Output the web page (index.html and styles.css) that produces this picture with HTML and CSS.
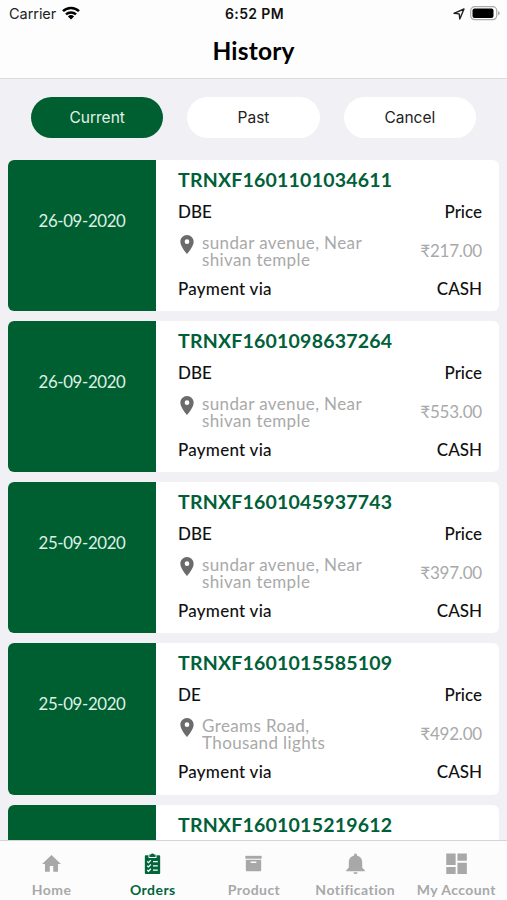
FILE: index.html
```html
<!DOCTYPE html>
<html lang="en">
<head>
<meta charset="utf-8">
<meta name="viewport" content="width=device-width, initial-scale=1">
<title>History</title>
<link rel="stylesheet" href="styles.css">
</head>
<body>
<svg width="0" height="0" class="defs" aria-hidden="true">
  <symbol id="pin" viewBox="5 2 14 20"><path fill-rule="evenodd" d="M12 2C8.13 2 5 5.13 5 9c0 5.25 7 13 7 13s7-7.75 7-13c0-3.87-3.13-7-7-7zm0 9.5a2.5 2.5 0 1 1 0-5 2.5 2.5 0 0 1 0 5z"/></symbol>
</svg>
<div class="app">
  <header class="header">
    <div class="status">
      <div class="carrier"><span>Carrier</span>
        <svg class="wifi" viewBox="0 0 18 14" fill="none" stroke="#000" stroke-width="2.5"><path d="M1 5.2a11.5 11.5 0 0 1 16 0M4 8.4a7.2 7.2 0 0 1 10 0"/><path fill="#000" stroke="none" d="M5.9 10.5a4.5 4.5 0 0 1 6.2 0L9 13.6z"/></svg>
      </div>
      <span class="time">6:52 PM</span>
      <div class="power">
        <svg class="arrow" viewBox="0 0 12 12" fill="none" stroke="#222" stroke-width="1.4" stroke-linejoin="round"><path d="M1 5.3 11 1 6.8 11 6.2 5.9z"/></svg>
        <svg class="battery" viewBox="0 0 30 15"><rect x=".7" y=".7" width="26" height="13" rx="4" fill="#fff" stroke="#aaa" stroke-width="1.2"/><rect x="2.5" y="2.5" width="21" height="9.5" rx="2" fill="#000"/><path d="M28 5v4.5q1.7-.6 1.7-2.2T28 5z" fill="#aaa"/></svg>
      </div>
    </div>
    <h1>History</h1>
  </header>
  <nav class="filters">
    <button class="pill active">Current</button>
    <button class="pill">Past</button>
    <button class="pill">Cancel</button>
  </nav>
  <main class="orders">
    <article class="card">
      <div class="date">26-09-2020</div>
      <div class="body">
        <h2>TRNXF1601101034611</h2>
        <div class="row shop"><span>DBE</span><span>Price</span></div>
        <div class="row place"><svg class="pin"><use href="#pin"/></svg><p>sundar avenue, Near<br>shivan temple</p><span class="price">₹217.00</span></div>
        <div class="row pay"><span class="via">Payment via</span><span>CASH</span></div>
      </div>
    </article>
    <article class="card">
      <div class="date">26-09-2020</div>
      <div class="body">
        <h2>TRNXF1601098637264</h2>
        <div class="row shop"><span>DBE</span><span>Price</span></div>
        <div class="row place"><svg class="pin"><use href="#pin"/></svg><p>sundar avenue, Near<br>shivan temple</p><span class="price">₹553.00</span></div>
        <div class="row pay"><span class="via">Payment via</span><span>CASH</span></div>
      </div>
    </article>
    <article class="card">
      <div class="date">25-09-2020</div>
      <div class="body">
        <h2>TRNXF1601045937743</h2>
        <div class="row shop"><span>DBE</span><span>Price</span></div>
        <div class="row place"><svg class="pin"><use href="#pin"/></svg><p>sundar avenue, Near<br>shivan temple</p><span class="price">₹397.00</span></div>
        <div class="row pay"><span class="via">Payment via</span><span>CASH</span></div>
      </div>
    </article>
    <article class="card">
      <div class="date">25-09-2020</div>
      <div class="body">
        <h2>TRNXF1601015585109</h2>
        <div class="row shop"><span>DE</span><span>Price</span></div>
        <div class="row place"><svg class="pin"><use href="#pin"/></svg><p>Greams Road,<br>Thousand lights</p><span class="price">₹492.00</span></div>
        <div class="row pay"><span class="via">Payment via</span><span>CASH</span></div>
      </div>
    </article>
    <article class="card">
      <div class="date"></div>
      <div class="body">
        <h2>TRNXF1601015219612</h2>
      </div>
    </article>
  </main>
  <nav class="tabs">
    <a class="tab"><svg viewBox="0 0 24 24"><path d="M10.2 20.5v-6h3.6v6h5V12.500h3L12 3 2.200 12.500h3v8z"/></svg><span>Home</span></a>
    <a class="tab active"><svg viewBox="0 0 24 24"><path d="M5 3.500h2.800v2.700h8.400V3.500H19q1 0 1 1V22q0 1-1 1H5q-1 0-1-1V4.500q0-1 1-1z"/><path d="M8.800 5.200V2.700h1.500a1.800 1.800 0 0 1 3.400 0h1.500v2.500z"/><g fill="none" stroke="#fff" stroke-width="1.300"><path d="m6.500 9.800 1.300 1.300 2.500-2.600M6.500 14.300l1.300 1.300 2.500-2.600M6.500 18.800l1.300 1.300 2.500-2.600M12.500 10h5M12.500 14.500h5M12.500 19h5"/></g></svg><span>Orders</span></a>
    <a class="tab"><svg viewBox="0 0 24 24"><path d="M3.500 4h17v3h-17z"/><path fill-rule="evenodd" d="M4 8h16v11q0 1-1 1H5q-1 0-1-1zM9 10v1.500h6V10z"/></svg><span>Product</span></a>
    <a class="tab"><svg viewBox="0 0 24 24"><path d="M12 23a2.200 2.200 0 0 0 2.200-2H9.800a2.200 2.200 0 0 0 2.200 2zM19 16.500V10.500c0-3.300-2.100-6-5.500-6.800V3a1.500 1.500 0 0 0-3 0v.700C7.100 4.500 5 7.200 5 10.500v6L2.300 19v1.200h19.400V19z"/></svg><span>Notification</span></a>
    <a class="tab"><svg viewBox="0 0 24 24"><path d="M1.300 1.500h9.800v12H1.300zM13 1.500h9.800v7.600H13zM1.300 15.700h9.800V23H1.300zM13 11.200h9.800V23H13z"/></svg><span>My Account</span></a>
  </nav>
</div>
</body>
</html>
```
FILE: styles.css
```css
* { box-sizing: border-box; }
body { margin: 0; background: #f0f0f5; color: #111; font-family: Lato, "Noto Sans", sans-serif; }
h1, h2, p { margin: 0; }
.defs { display: block; }
.app { width: 507px; height: 900px; overflow: hidden; display: flex; flex-direction: column; }
.header { flex: none; height: 79px; background: #fdfdfe; border-bottom: 1px solid #dcdce0; }
.status { height: 28px; padding: 0 7px 0 9px; display: grid; grid-template-columns: 1fr auto 1fr; align-items: center; font: 14.5px/28px Inter, sans-serif; color: #222; }
.carrier { display: flex; align-items: center; gap: 6px; letter-spacing: -.05px; }
.wifi { width: 18px; height: 14px; margin-top: -2px; }
.time { font-weight: 600; font-size: 14px; letter-spacing: .35px; color: #111; }
.power { display: flex; justify-content: flex-end; align-items: center; gap: 5px; }
.arrow { width: 12px; height: 12px; }
.battery { width: 30px; height: 15px; margin-top: -2px; }
h1 { text-align: center; font-size: 24.500px; line-height: 46px; font-weight: 700; letter-spacing: .2px; color: #000; }
.filters { flex: none; display: flex; gap: 24px; padding: 17.500px 31px 0; height: 80.500px; }
.pill { flex: 1; height: 41px; padding: 0; border: 0; border-radius: 21px; background: #fff; color: #222; font: 15.500px/41px Inter, sans-serif; }
.pill.active { background: #005f30; color: #e2f3e9; }
.orders { flex: 1; min-height: 0; overflow: hidden; display: flex; flex-direction: column; gap: 10px; padding: 0 8px; }
.card { flex: none; height: 151.300px; display: flex; background: #fff; border-radius: 6px; overflow: hidden; }
.date { width: 148px; background: #005f30; color: #dff0e7; font-size: 16.800px; letter-spacing: -.35px; line-height: 122px; text-align: center; }
.body { flex: 1; padding: 7px 17px 0 22px; }
h2 { font-size: 19.500px; line-height: 25px; font-weight: 700; color: #006039; letter-spacing: .22px; }
.row { display: flex; justify-content: space-between; font-size: 17px; line-height: 20px; font-weight: 500; }
.shop { margin-top: 10px; }
.place { height: 34px; margin-top: 12px; color: #a9a9a9; line-height: 17px; font-weight: 400; }
.pin { width: 14px; height: 19px; margin: 1px 8px 0 2px; fill: #6b6b6b; }
.place p { flex: 1; letter-spacing: .38px; }
.price { line-height: 34px; letter-spacing: -.2px; }
.pay { margin-top: 11px; }
.via { letter-spacing: .25px; }
.tabs { flex: none; height: 60px; padding-left: 1px; display: grid; grid-template-columns: repeat(5, 1fr); background: #fcfcfd; border-top: 1px solid #d4d4d8; }
.tab { display: flex; flex-direction: column; align-items: center; color: #a8a8a8; font-size: 14px; line-height: 18px; font-weight: 700; letter-spacing: .45px; white-space: nowrap; }
.tab svg { width: 23px; height: 23px; margin: 11px 0 6px; fill: currentColor; }
.tab.active { color: #00663a; }
```
